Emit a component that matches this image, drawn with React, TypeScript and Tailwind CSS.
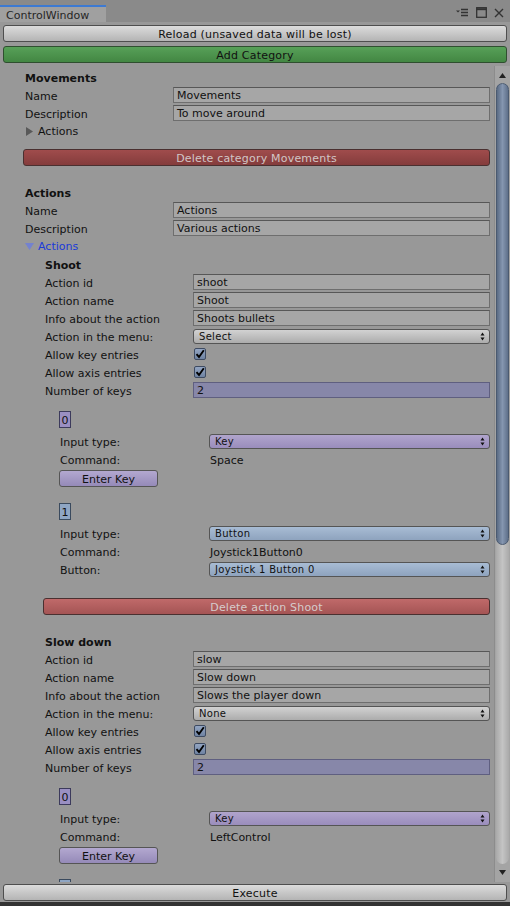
import React from "react";

const UpDown = () => (
  <svg width="5" height="9" viewBox="0 0 5 9" className="shrink-0">
    <path d="M2.5 0.5L4.5 3.5H0.5z M2.5 8.5L0.5 5.5H4.5z" fill="#111" />
  </svg>
);

const Check = () => (
  <svg width="10" height="10" viewBox="0 0 10 10">
    <path d="M1.5 5.2L4 8L8.8 1.2" stroke="#000" strokeWidth="1.9" fill="none" />
  </svg>
);

function Row({
  level,
  label,
  children,
}: {
  level: 1 | 2 | 3;
  label?: React.ReactNode;
  children?: React.ReactNode;
}) {
  const pl = level === 1 ? "pl-[25px]" : level === 2 ? "pl-[45px]" : "pl-[60px]";
  const lw = level === 3 ? "w-[149px]" : "w-[148px]";
  return (
    <div className={`flex h-[18px] items-center pr-[4px] ${pl}`}>
      <div className={`${lw} shrink-0 whitespace-nowrap pt-[2px] text-[#111]`}>{label}</div>
      <div className="flex min-w-0 flex-1 items-center">{children}</div>
    </div>
  );
}

function Field({ value, purple }: { value: string; purple?: boolean }) {
  return (
    <div
      className={
        purple
          ? "h-[16px] w-full border border-[#5f5f80] bg-[#8787a9] pl-[3px] pt-[1px] leading-[13px] text-[#111]"
          : "h-[16px] w-full border border-[#6e6e6e] border-t-[#575757] bg-[#a6a6a6] pl-[3px] pt-[1px] leading-[13px] text-[#111]"
      }
    >
      {value}
    </div>
  );
}

function Drop({ value, tone }: { value: string; tone: "gray" | "purple" | "blue" }) {
  const bg =
    tone === "gray"
      ? "bg-gradient-to-b from-[#d2d2d2] to-[#acacac]"
      : tone === "purple"
      ? "bg-gradient-to-b from-[#b0a4cc] to-[#9a8dbc]"
      : "bg-gradient-to-b from-[#a8bcd4] to-[#8ea3be]";
  return (
    <div
      className={`flex h-[15px] w-full items-center justify-between rounded-[3px] border border-[#555] pl-[5px] pr-[4px] text-[10px] leading-[13px] tracking-[0.3px] text-[#111] ${bg}`}
    >
      <span className="pt-[1px]">{value}</span>
      <UpDown />
    </div>
  );
}

function CheckBox() {
  return (
    <div className="ml-[1px] flex h-[12px] w-[12px] items-center justify-center rounded-[2px] border border-[#3e4b62] bg-gradient-to-b from-[#93a5c2] to-[#6f83a2]">
      <Check />
    </div>
  );
}

function Header({ level, text }: { level: 1 | 2; text: string }) {
  return (
    <div
      className={`flex h-[18px] items-center pt-[2px] font-bold text-[#111] ${
        level === 1 ? "pl-[25px]" : "pl-[45px]"
      }`}
    >
      {text}
    </div>
  );
}

function IndexBox({ n, tone, className }: { n: string; tone: "purple" | "blue"; className: string }) {
  return (
    <div
      className={`ml-[59px] flex h-[17px] w-[12px] items-center justify-center border pt-[1px] text-[#111] ${
        tone === "purple" ? "border-[#3c3a5c] bg-[#9a8fc2]" : "border-[#3a4a5e] bg-[#8fa6c4]"
      } ${className}`}
    >
      {n}
    </div>
  );
}

function EnterKey({ className }: { className: string }) {
  return (
    <div
      className={`ml-[59px] flex h-[17px] w-[99px] items-center justify-center rounded-[3px] border border-[#555] bg-gradient-to-b from-[#b3a8d0] to-[#958ab8] pt-[1px] text-[#111] ${className}`}
    >
      Enter Key
    </div>
  );
}

function DeleteBtn({ text, className, light }: { text: string; className: string; light?: boolean }) {
  return (
    <div
      className={`mr-[4px] flex h-[17px] items-center justify-center rounded-[3px] border border-[#4a3030] pt-[1px] tracking-[0.2px] ${
        light
          ? "bg-gradient-to-b from-[#c06a6a] to-[#a45454] text-[#d6cccc]"
          : "bg-gradient-to-b from-[#a04c4c] to-[#843c3c] text-[#d2c6c6]"
      } ${className}`}
    >
      {text}
    </div>
  );
}

function Action({
  title,
  id,
  name,
  info,
  menu,
}: {
  title: string;
  id: string;
  name: string;
  info: string;
  menu: string;
}) {
  return (
    <>
      <Header level={2} text={title} />
      <Row level={2} label="Action id">
        <Field value={id} />
      </Row>
      <Row level={2} label="Action name">
        <Field value={name} />
      </Row>
      <Row level={2} label="Info about the action">
        <Field value={info} />
      </Row>
      <Row level={2} label="Action in the menu:">
        <Drop value={menu} tone="gray" />
      </Row>
      <Row level={2} label="Allow key entries">
        <CheckBox />
      </Row>
      <Row level={2} label="Allow axis entries">
        <CheckBox />
      </Row>
      <Row level={2} label="Number of keys">
        <Field value="2" purple />
      </Row>
    </>
  );
}

function GrayButton({ text, className }: { text: string; className: string }) {
  return (
    <div
      className={`mx-[3px] flex h-[17px] items-center justify-center rounded-[3px] border border-[#4e4e4e] bg-gradient-to-b from-[#dcdcdc] to-[#b4b4b4] pt-[1px] tracking-[0.2px] text-[#111] ${className}`}
    >
      {text}
    </div>
  );
}

export default function App() {
  return (
    <div className="flex h-[906px] w-[510px] flex-col overflow-hidden bg-[#989898] font-['DejaVu_Sans',sans-serif] text-[11px] leading-[13px]">
      {/* tab bar */}
      <div className="flex h-[22px] shrink-0 items-end justify-between bg-[#8a8a8a]">
        <div className="flex h-[17px] w-[106px] items-center border-t-2 border-[#3d7ad2] bg-[#a0a0a0] pl-[6px] pt-[1px] text-[#262626]">
          ControlWindow
        </div>
        <div className="mb-[4px] mr-[6px] flex items-center gap-[7px] text-[#3a3a3a]">
          <svg width="13" height="9" viewBox="0 0 13 9">
            <path d="M0 2.5H4L2 4.5z" fill="#333" />
            <path d="M5 1.5H12M5 4.5H12M5 7.5H12" stroke="#333" strokeWidth="1.3" />
          </svg>
          <svg width="11" height="11" viewBox="0 0 11 11">
            <rect x="0.7" y="0.7" width="9.6" height="9.6" fill="none" stroke="#333" strokeWidth="1.3" />
            <path d="M0.7 2.2H10.3" stroke="#333" strokeWidth="2" />
          </svg>
          <svg width="10" height="10" viewBox="0 0 10 10">
            <path d="M1 1L9 9M9 1L1 9" stroke="#333" strokeWidth="1.4" />
          </svg>
        </div>
      </div>

      <GrayButton text="Reload (unsaved data will be lost)" className="mt-[3px] shrink-0" />
      <div className="mx-[3px] mt-[4px] flex h-[17px] shrink-0 items-center justify-center rounded-[3px] border border-[#2f4f2f] bg-gradient-to-b from-[#57a058] to-[#438743] pt-[1px] tracking-[0.2px] text-[#111]">
        Add Category
      </div>

      {/* scroll area */}
      <div className="mt-[3px] flex h-[816px] shrink-0">
        <div className="w-[494px] shrink-0 overflow-hidden pt-[2px]">
          <Header level={1} text="Movements" />
          <Row level={1} label="Name">
            <Field value="Movements" />
          </Row>
          <Row level={1} label="Description">
            <Field value="To move around" />
          </Row>
          <div className="flex h-[18px] items-center pl-[26px] pt-[1px] text-[#111]">
            <svg width="7" height="9" viewBox="0 0 7 9" className="mr-[5px]">
              <path d="M0 0L7 4.5L0 9z" fill="#595959" />
            </svg>
            Actions
          </div>
          <DeleteBtn text="Delete category Movements" className="ml-[23px] mt-[9px]" />

          <div className="mt-[17px]">
            <Header level={1} text="Actions" />
          </div>
          <Row level={1} label="Name">
            <Field value="Actions" />
          </Row>
          <Row level={1} label="Description">
            <Field value="Various actions" />
          </Row>
          <div className="flex h-[18px] items-center pl-[25px] pt-[1px] text-[#1a3ad8]">
            <svg width="9" height="7" viewBox="0 0 9 7" className="mr-[4px]">
              <path d="M0 0H9L4.5 7z" fill="#7482cf" />
            </svg>
            Actions
          </div>

          <Action title="Shoot" id="shoot" name="Shoot" info="Shoots bullets" menu="Select" />
          <IndexBox n="0" tone="purple" className="mt-[12px]" />
          <div className="mt-[4px]">
            <Row level={3} label="Input type:">
              <Drop value="Key" tone="purple" />
            </Row>
          </div>
          <Row level={3} label="Command:">
            <span className="pl-[1px] pt-[2px] text-[#111]">Space</span>
          </Row>
          <EnterKey className="mt-[2px]" />
          <IndexBox n="1" tone="blue" className="mt-[16px]" />
          <div className="mt-[4px]">
            <Row level={3} label="Input type:">
              <Drop value="Button" tone="blue" />
            </Row>
          </div>
          <Row level={3} label="Command:">
            <span className="pl-[1px] pt-[2px] text-[#111]">Joystick1Button0</span>
          </Row>
          <Row level={3} label="Button:">
            <Drop value="Joystick 1 Button 0" tone="blue" />
          </Row>
          <DeleteBtn text="Delete action Shoot" className="ml-[43px] mt-[20px]" light />

          <div className="mt-[17px]">
            <Action title="Slow down" id="slow" name="Slow down" info="Slows the player down" menu="None" />
          </div>
          <IndexBox n="0" tone="purple" className="mt-[12px]" />
          <div className="mt-[4px]">
            <Row level={3} label="Input type:">
              <Drop value="Key" tone="purple" />
            </Row>
          </div>
          <Row level={3} label="Command:">
            <span className="pl-[1px] pt-[2px] text-[#111]">LeftControl</span>
          </Row>
          <EnterKey className="mt-[2px]" />
          <IndexBox n="" tone="blue" className="mt-[15px]" />
        </div>

        {/* scrollbar */}
        <div className="flex w-[16px] shrink-0 flex-col border-l border-[#8c8c8c] bg-[#a4a4a4] pb-[2px]">
          <div className="flex h-[17px] shrink-0 items-center justify-center pt-[2px]">
            <svg width="7" height="5" viewBox="0 0 7 5">
              <path d="M3.5 0L7 5H0z" fill="#222" />
            </svg>
          </div>
          <div className="mx-[1px] flex flex-1 flex-col rounded-full bg-gradient-to-r from-[#a9a9a9] via-[#c4c4c4] to-[#aaaaaa]">
            <div className="h-[462px] shrink-0 rounded-full border border-[#4b5a70] bg-gradient-to-r from-[#5a6b84] via-[#8596b0] to-[#5f708a]" />
          </div>
          <div className="flex h-[16px] shrink-0 items-center justify-center">
            <svg width="7" height="5" viewBox="0 0 7 5">
              <path d="M0 0H7L3.5 5z" fill="#222" />
            </svg>
          </div>
        </div>
      </div>

      <GrayButton text="Execute" className="mt-[2px] shrink-0" />
      <div className="mt-[1px] h-[4px] shrink-0 bg-[#333]" />
    </div>
  );
}
